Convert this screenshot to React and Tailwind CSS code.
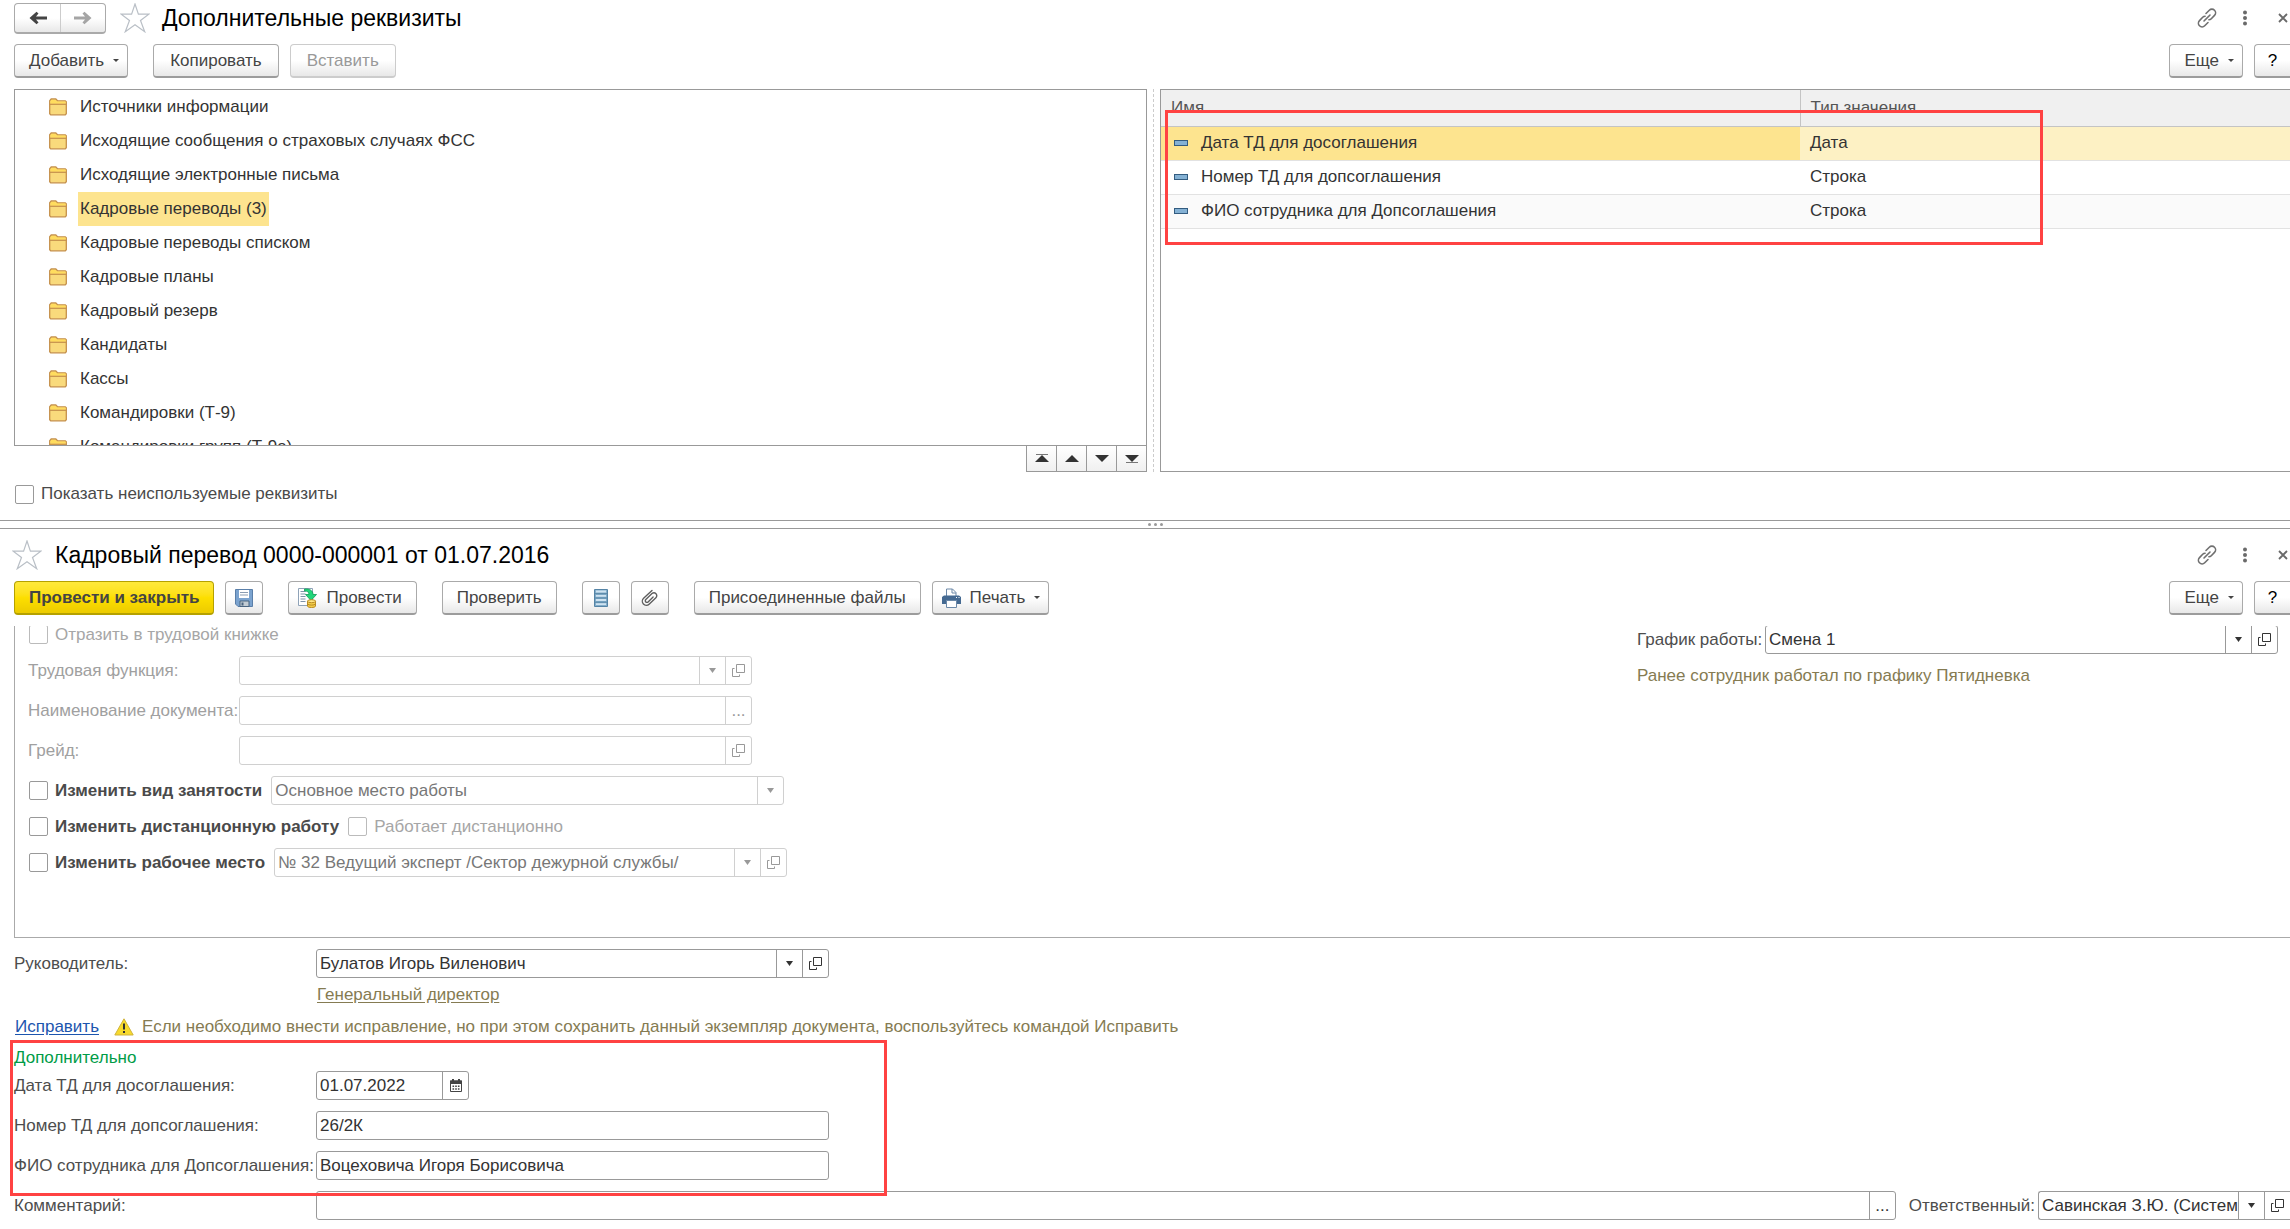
import React, { useState } from "react";

const folders = [
  "Источники информации",
  "Исходящие сообщения о страховых случаях ФСС",
  "Исходящие электронные письма",
  "Кадровые переводы (3)",
  "Кадровые переводы списком",
  "Кадровые планы",
  "Кадровый резерв",
  "Кандидаты",
  "Кассы",
  "Командировки (Т-9)",
  "Командировки групп (Т-9а)",
];

const attributes = [
  { name: "Дата ТД для досоглашения", type: "Дата" },
  { name: "Номер ТД для допсоглашения", type: "Строка" },
  { name: "ФИО сотрудника для Допсоглашения", type: "Строка" },
];

/* Icons */

const StarIcon = () => (
  <svg className="w-[30px] h-[30px]" viewBox="0 0 30 30" fill="none" stroke="#b9bfc6" strokeWidth="1.2">
    <path d="M15 1l3.4 10.200h10.400l-8.300 6.300 4.200 11.200L15 21.800 5.300 28.700l4.200-11.200-8.300-6.300h10.400z" />
  </svg>
);

const ArrowIcon = ({ right, color }) => (
  <svg className="w-[18px] h-[14px]" viewBox="0 0 18 14" fill={color}>
    {right ? (
      <path d="M0 5.500h11L8.500 2.500 10.500.8 17.500 7l-7 6.200-2-1.700 2.500-3H0z" />
    ) : (
      <path d="M18 5.500H7l2.500-3L7.500.8.500 7l7 6.200 2-1.700-2.500-3h11z" />
    )}
  </svg>
);

const CaretIcon = () => (
  <svg className="w-[7px] h-[5px] shrink-0" viewBox="0 0 7 5" fill="currentColor">
    <path d="M0 0h7L3.5 5z" />
  </svg>
);

const MenuCaretIcon = () => (
  <svg className="w-[6px] h-[3px] shrink-0" viewBox="0 0 6 3" fill="currentColor">
    <path d="M0 0h6L3 3z" />
  </svg>
);

const FolderIcon = () => (
  <svg className="w-[18px] h-[18px] shrink-0" viewBox="0 0 18 18">
    <path
      d="M.7 15.8V2.8L2.2 1h4.6l1.7 1.8h7.8l1 1v12l-1 1H1.7z"
      fill="#f9da7c"
      stroke="#c5904b"
      strokeWidth="1.3"
    />
    <path d="M1.4 3l1.2-1.3h3.9l1.6 1.8h8.5v2.3H1.4z" fill="#ffdc5e" />
    <path d="M.7 6.3h16.6" stroke="#c5904b" strokeWidth="1.2" />
  </svg>
);

const LinkIcon = () => (
  <svg className="w-5 h-5" viewBox="0 0 20 20" fill="none" stroke="#707070" strokeWidth="1.6" strokeLinecap="round">
    <path d="M9 5.500l3.300-3.300a3.600 3.600 0 0 1 5.200 5.200l-3.200 3.300a3.400 3.400 0 0 1-2.400 1" />
    <path d="M11 14.500l-3.300 3.300a3.600 3.600 0 0 1-5.200-5.200l3.200-3.300a3.400 3.400 0 0 1 2.400-1" />
    <path d="M7 13l6-6" />
  </svg>
);

const DotsIcon = () => (
  <svg className="w-1 h-4" viewBox="0 0 4 16" fill="#6a6a6a">
    <circle cx="2" cy="2.5" r="2" />
    <circle cx="2" cy="8" r="2" />
    <circle cx="2" cy="13.5" r="2" />
  </svg>
);

const CloseIcon = () => (
  <svg className="w-[10px] h-[10px]" viewBox="0 0 10 10" stroke="#6a6a6a" strokeWidth="1.8">
    <path d="M1 1l8 8M9 1L1 9" />
  </svg>
);

const SaveIcon = () => (
  <svg className="w-[18px] h-[18px]" viewBox="0 0 18 18">
    <path d="M.5.5h17v17H3l-2.500-2.500z" fill="#7ba3cf" stroke="#5a7fa9" />
    <path d="M4 1h10v8H4z" fill="#fff" />
    <path d="M5 3.500h8M5 6h8" stroke="#8b9db3" />
    <path d="M5 12h9v5.500H5z" fill="#c3ccd3" stroke="#4b657f" />
    <path d="M6.500 13.500h2v3h-2z" fill="#4b657f" />
  </svg>
);

const PostIcon = () => (
  <svg className="w-5 h-5" viewBox="0 0 20 20">
    <path d="M1.500.500h14v17h-14z" fill="#fff" stroke="#8fa3b8" />
    <path d="M3.500 3.500h5M3.500 6h5M3.500 8.500h5M3.500 11h5M3.500 13.500h5" stroke="#7f93a8" />
    <path d="M7.500 1C12.500.500 16 2.500 16 6.500h3.500L14 12.500 8.500 6.500H12C12 4 10.500 3 7.500 3z" fill="#22d67b" stroke="#109a55" strokeWidth=".8" />
    <path d="M10.500 13v5c0 2 8 2 8 0v-5z" fill="#f5cf49" stroke="#b98a23" />
    <ellipse cx="14.500" cy="13.200" rx="4" ry="1.500" fill="#ffe784" stroke="#b98a23" />
    <path d="M10.500 16c1 1.500 7 1.500 8 0" fill="none" stroke="#b98a23" />
  </svg>
);

const RegisterIcon = () => (
  <svg className="w-[14px] h-[18px]" viewBox="0 0 14 18">
    <path d="M.500.500h13v17H.500z" fill="#84aecb" stroke="#5584a6" />
    <path d="M2 2.500h10M2 6.800h10M2 11h10M2 15.200h10" stroke="#cfe3f1" strokeWidth="1.800" />
    <path d="M0 4.700h14M0 9h14M0 13.200h14" stroke="#5584a6" />
  </svg>
);

const ClipIcon = () => (
  <svg className="w-[17px] h-[18px]" viewBox="0 0 17 18" fill="none" stroke="#5f5f5f" strokeWidth="1.400" strokeLinecap="round">
    <path d="M11 1.500L2.600 9.300a4 4 0 0 0 5.500 5.900l6.800-6.500a2.800 2.800 0 0 0-3.900-4.100l-6.200 6a1.600 1.600 0 0 0 2.300 2.300l5-4.900" />
  </svg>
);

const PrintIcon = () => (
  <svg className="w-[19px] h-5" viewBox="0 0 19 20">
    <path d="M4.500 8V1h6l3.500 3.500V8" fill="#fff" stroke="#6c89a8" />
    <path d="M10 1v4h4" fill="none" stroke="#6c89a8" />
    <path d="M2 7.500h15l2 1.500v7H0V9z" fill="#456a92" />
    <path d="M14 9.500h1M16.500 9.500h1" stroke="#fff" />
    <path d="M4.500 12.500h10v7h-10z" fill="#fff" stroke="#6c89a8" />
  </svg>
);

const OpenIcon = () => (
  <svg className="w-[13px] h-[13px] shrink-0" viewBox="0 0 13 13" fill="none" stroke="currentColor">
    <path d="M4.500.500h8v8h-8z" />
    <path d="M2.500 4.500h-2v8h7v-2" />
  </svg>
);

const CalendarIcon = () => (
  <svg className="w-3 h-[13px]" viewBox="0 0 12 13">
    <path d="M.500 2h11v10.500H.500z" fill="#fff" stroke="#444" />
    <path d="M0 1.500h12V5H0zM2 0h2v2H2zM8 0h2v2H8z" fill="#444" />
    <path d="M2.500 7.200h7M2.500 10h7" stroke="#444" strokeWidth="1.600" strokeDasharray="1.600 1.100" />
  </svg>
);

const WarningIcon = () => (
  <svg className="w-5 h-[18px] shrink-0" viewBox="0 0 20 18">
    <path d="M10 .8L19.200 17H.8z" fill="#f7da2c" stroke="#cfb33c" strokeLinejoin="round" />
    <path d="M10 5.500v6" stroke="#333" strokeWidth="2" />
    <path d="M10 13v2" stroke="#333" strokeWidth="2" />
  </svg>
);

const scrollShapes = [
  { label: "В начало", path: "M7 1l7 7H0z", line: "M1 .5h12" },
  { label: "Вверх", path: "M7 1l7 7H0z" },
  { label: "Вниз", path: "M7 8L0 1h14z" },
  { label: "В конец", path: "M7 8L0 1h14z", line: "M1 8.500h12" },
];

/* Controls */

const Button = ({ children, className = "px-[14px]", ...props }) => (
  <button
    className={`h-[34px] flex items-center justify-center border border-[#aaa] border-b-2 border-b-[#9c9c9c] rounded bg-linear-to-b from-white from-50% to-[#e8e8e8] text-[#444] whitespace-nowrap disabled:text-[#999] disabled:border-[#ccc] ${className}`}
    {...props}
  >
    {children}
  </button>
);

const Checkbox = ({ label, bold, disabled }) => (
  <label className={`flex items-center gap-[7px] ${bold ? "font-bold" : ""} ${disabled ? "text-[#a6a6a6]" : "text-[#4a4a4a]"}`}>
    <input
      type="checkbox"
      disabled={disabled}
      className="appearance-none w-[19px] h-[19px] border border-[#999] rounded-xs bg-white checked:bg-[#fde48f] disabled:border-[#bbb]"
    />
    {label}
  </label>
);

const icons = {
  list: { label: "Выбрать", icon: <CaretIcon /> },
  open: { label: "Открыть", icon: <OpenIcon /> },
  more: { label: "Подробнее", icon: "..." },
  date: { label: "Календарь", icon: <CalendarIcon /> },
};

const Field = ({ id, title, value = "", buttons = [], options, disabled, className = "w-[513px]" }) => (
  <div
    className={`h-[29px] flex border rounded-[3px] overflow-hidden ${
      disabled ? "border-[#d0d0d0] text-[#999]" : "border-[#999] text-[#333]"
    } ${className}`}
  >
    {options ? (
      <select
        id={id}
        aria-label={title}
        disabled={disabled}
        className="appearance-none flex-1 min-w-0 pl-[3px] text-[#777] opacity-100"
      >
        {options.map((option) => (
          <option key={option}>{option}</option>
        ))}
      </select>
    ) : (
      <input
        id={id}
        aria-label={title}
        defaultValue={value}
        disabled={disabled}
        className="flex-1 min-w-0 pl-[3px] outline-none disabled:text-[#777]"
      />
    )}
    {buttons.map((key) => (
      <button
        key={key}
        aria-label={icons[key].label}
        disabled={disabled}
        className={`w-[26px] shrink-0 flex items-center justify-center border-l ${
          disabled ? "border-[#d0d0d0]" : "border-[#999]"
        }`}
      >
        {icons[key].icon}
      </button>
    ))}
  </div>
);

const FormRow = ({ id, label, labelClass = "w-[302px]", ...props }) => (
  <div className="flex items-center">
    <label htmlFor={id} className={`shrink-0 whitespace-nowrap ${labelClass}`}>
      {label}
    </label>
    <Field id={id} {...props} />
  </div>
);

const WindowActions = () => (
  <div className="ml-auto flex items-center pr-[2px]">
    <button aria-label="Ссылка" className="mr-[26px]">
      <LinkIcon />
    </button>
    <button aria-label="Меню" className="mr-[31px]">
      <DotsIcon />
    </button>
    <button aria-label="Закрыть">
      <CloseIcon />
    </button>
  </div>
);

const MoreAndHelp = () => (
  <div className="ml-auto flex gap-[11px]">
    <Button className="pl-[14px] pr-2 gap-[9px]">
      Еще <MenuCaretIcon />
    </Button>
    <Button className="w-9 border-r-0 rounded-r-none text-black font-medium">?</Button>
  </div>
);

const AttributesWindow = () => {
  const [selected, setSelected] = useState("Кадровые переводы (3)");

  return (
    <section className="pl-[14px]">
      <header className="h-9 flex items-center">
        <div className="h-[31px] flex border border-[#aaa] border-b-2 rounded bg-linear-to-b from-white from-50% to-[#e8e8e8]">
          <button aria-label="Назад" className="w-[46px] flex items-center justify-center border-r border-[#ccc]">
            <ArrowIcon color="#444" />
          </button>
          <button aria-label="Вперед" className="w-11 flex items-center justify-center">
            <ArrowIcon right color="#a5a5a5" />
          </button>
        </div>
        <button aria-label="В избранное" className="ml-[14px] mr-3">
          <StarIcon />
        </button>
        <h1 className="text-[23px] leading-7 text-black">Дополнительные реквизиты</h1>
        <WindowActions />
      </header>

      <div className="mt-2 flex">
        <Button className="pl-[14px] pr-2 gap-[9px]">
          Добавить <MenuCaretIcon />
        </Button>
        <Button className="px-4 ml-[25px]">Копировать</Button>
        <Button className="px-4 ml-[11px]" disabled>
          Вставить
        </Button>
        <MoreAndHelp />
      </div>

      <div className="mt-[11px] grid grid-cols-[1133fr_13px_1130fr]">
        {/* Folder list */}
        <div>
          <ul className="h-[357px] border border-[#999] overflow-hidden">
            {folders.map((folder) => (
              <li key={folder} className="h-[34px] flex items-center pl-[34px] text-[#333]">
                <FolderIcon />
                <button
                  onClick={() => setSelected(folder)}
                  className={`h-full ml-[11px] px-[2px] ${selected === folder ? "bg-[#fde48f]" : ""}`}
                >
                  {folder}
                </button>
              </li>
            ))}
          </ul>
          <div className="flex justify-end">
            <div className="flex h-[26px] border-b border-r border-[#999]">
              {scrollShapes.map((shape) => (
                <button
                  key={shape.label}
                  aria-label={shape.label}
                  className="w-[30px] flex items-center justify-center border-l border-[#999] bg-linear-to-b from-white to-[#f0f0f0]"
                >
                  <svg className="w-[14px] h-[9px]" viewBox="0 0 14 9">
                    <path d={shape.path} fill="#333" />
                    {shape.line && <path d={shape.line} stroke="#777" />}
                  </svg>
                </button>
              ))}
            </div>
          </div>
        </div>

        <div className="flex justify-center">
          <div className="border-l border-dashed border-[#ccc]"></div>
        </div>

        {/* Attributes table */}
        <div className="relative border border-r-0 border-[#999]">
          <table className="w-full table-fixed border-collapse text-[#333]">
            <thead>
              <tr className="h-9 bg-[#f0f0f0] border-b border-[#c4c4c4] text-[#555]">
                <th className="w-[56.6%] pl-[10px] text-left font-normal border-r border-[#c4c4c4]">Имя</th>
                <th className="pl-[10px] text-left font-normal">Тип значения</th>
              </tr>
            </thead>
            <tbody>
              {attributes.map((row, i) => (
                <tr
                  key={row.name}
                  className={`h-[34px] border-b border-[#e2e2e2] ${
                    i === 0 ? "bg-[#fdf1c4]" : i === 2 ? "bg-[#fafafa]" : ""
                  }`}
                >
                  <td className={`p-0 ${i === 0 ? "bg-[#fde48f]" : ""}`}>
                    <div className="flex items-center gap-[13px] pl-[13px]">
                      <span className="w-[14px] h-[6px] border border-[#335c80] bg-[#84b1d4]"></span>
                      {row.name}
                    </div>
                  </td>
                  <td className="py-0 pl-[10px]">{row.type}</td>
                </tr>
              ))}
            </tbody>
          </table>
          <div className="absolute top-5 left-1 w-[878px] h-[135px] border-3 border-[#ff4242] pointer-events-none"></div>
        </div>
      </div>

      <div className="mt-3 mb-4 h-5 flex items-center pl-px">
        <Checkbox label="Показать неиспользуемые реквизиты" />
      </div>
    </section>
  );
};

const TransferWindow = () => (
  <section className="pl-[14px] text-[#4d4d4d]">
    <header className="h-[52px] flex items-center">
      <button aria-label="В избранное" className="-ml-[2px] mr-[13px]">
        <StarIcon />
      </button>
      <h1 className="text-[23px] leading-7 text-black">Кадровый перевод 0000-000001 от 01.07.2016</h1>
      <WindowActions />
    </header>

    <div className="flex">
      <button className="h-[34px] px-[14px] border border-[#b5a100] border-b-2 rounded bg-linear-to-b from-[#ffe93a] via-[#fddf00] to-[#eccb00] font-bold text-[#444]">
        Провести и закрыть
      </button>
      <Button className="w-[38px] ml-[11px]" aria-label="Записать">
        <SaveIcon />
      </Button>
      <Button className="pl-2 pr-[14px] gap-[9px] ml-[25px]">
        <PostIcon /> Провести
      </Button>
      <Button className="px-[14px] ml-[25px]">Проверить</Button>
      <Button className="w-[38px] ml-[25px]" aria-label="Движения документа">
        <RegisterIcon />
      </Button>
      <Button className="w-[38px] ml-[11px]" aria-label="Вложения">
        <ClipIcon />
      </Button>
      <Button className="px-[14px] ml-[25px]">Присоединенные файлы</Button>
      <Button className="pl-[9px] pr-2 gap-[9px] ml-[11px]">
        <PrintIcon /> Печать <MenuCaretIcon />
      </Button>
      <MoreAndHelp />
    </div>

    {/* Scrolled form body */}
    <div className="mt-[11px] flex border-l border-b border-[#aaa] overflow-hidden">
      <div className="-mt-[6px] pl-[13px] pb-[60px] flex flex-col gap-[7px] text-[#a0a0a0]">
        <div className="h-[29px] flex items-center pl-px">
          <Checkbox label="Отразить в трудовой книжке" disabled />
        </div>
        <div className="flex flex-col gap-[11px]">
          <FormRow id="func" label="Трудовая функция:" labelClass="w-[211px]" buttons={["list", "open"]} disabled />
          <FormRow id="doc" label="Наименование документа:" labelClass="w-[211px]" buttons={["more"]} disabled />
          <FormRow id="grade" label="Грейд:" labelClass="w-[211px]" buttons={["open"]} disabled />
          <div className="flex items-center gap-[9px] pl-px">
            <Checkbox label="Изменить вид занятости" bold />
            <Field
              id="employment"
              title="Вид занятости"
              options={["Основное место работы"]}
              buttons={["list"]}
              disabled
            />
          </div>
        </div>
        <div className="h-[29px] flex items-center gap-[9px] pl-px">
          <Checkbox label="Изменить дистанционную работу" bold />
          <Checkbox label="Работает дистанционно" disabled />
        </div>
        <div className="flex items-center gap-[9px] pl-px">
          <Checkbox label="Изменить рабочее место" bold />
          <Field
            id="place"
            title="Рабочее место"
            value="№ 32 Ведущий эксперт /Сектор дежурной службы/"
            buttons={["list", "open"]}
            disabled
          />
        </div>
      </div>
      <div className="-mt-px ml-auto mr-3">
        <FormRow id="schedule" label="График работы:" labelClass="w-[128px]" value="Смена 1" buttons={["list", "open"]} />
        <p className="mt-3 text-[#857b52]">Ранее сотрудник работал по графику Пятидневка</p>
      </div>
    </div>

    <div className="mt-[11px]">
      <FormRow id="head" label="Руководитель:" value="Булатов Игорь Виленович" buttons={["list", "open"]} />
    </div>
    <div className="mt-[7px] pl-[303px]">
      <a href="#head" className="text-[#857b52] underline underline-offset-2">Генеральный директор</a>
    </div>
    <div className="mt-3 flex items-center text-[#857b52]">
      <a href="#fix" className="pl-px mr-[15px] text-[#1c55ae] underline underline-offset-2">Исправить</a>
      <WarningIcon />
      <span className="ml-2">
        Если необходимо внести исправление, но при этом сохранить данный экземпляр документа, воспользуйтесь командой Исправить
      </span>
    </div>

    <div className="relative mt-[11px]">
      <h2 className="mb-[3px] text-[#009c47]">Дополнительно</h2>
      <div className="flex flex-col gap-[11px]">
        <FormRow id="date" label="Дата ТД для досоглашения:" value="01.07.2022" buttons={["date"]} className="w-[153px]" />
        <FormRow id="number" label="Номер ТД для допсоглашения:" value="26/2К" />
        <FormRow id="person" label="ФИО сотрудника для Допсоглашения:" value="Воцеховича Игоря Борисовича" />
      </div>
      <div className="absolute -top-2 -left-1 w-[877px] h-[156px] border-3 border-[#ff4242] pointer-events-none"></div>
    </div>

    <div className="mt-[11px] mb-[9px] flex items-center">
      <label htmlFor="comment" className="w-[302px] shrink-0">Комментарий:</label>
      <Field id="comment" buttons={["more"]} className="flex-1" />
      <label htmlFor="owner" className="ml-[13px] mr-[3px]">Ответственный:</label>
      <Field
        id="owner"
        value="Савинская З.Ю. (Системный программист)"
        buttons={["list", "open"]}
        className="w-[252px] border-r-0 rounded-r-none"
      />
    </div>
  </section>
);

export default function App() {
  return (
    <main className="bg-white font-['Liberation_Sans',Arial,sans-serif] text-[17px] leading-5 overflow-hidden">
      <AttributesWindow />
      <div className="h-[9px] border-y border-[#999] flex items-center justify-center gap-[3px] pl-5">
        <span className="w-[3px] h-[3px] rounded-full bg-[#999]"></span>
        <span className="w-[3px] h-[3px] rounded-full bg-[#999]"></span>
        <span className="w-[3px] h-[3px] rounded-full bg-[#999]"></span>
      </div>
      <TransferWindow />
    </main>
  );
}
